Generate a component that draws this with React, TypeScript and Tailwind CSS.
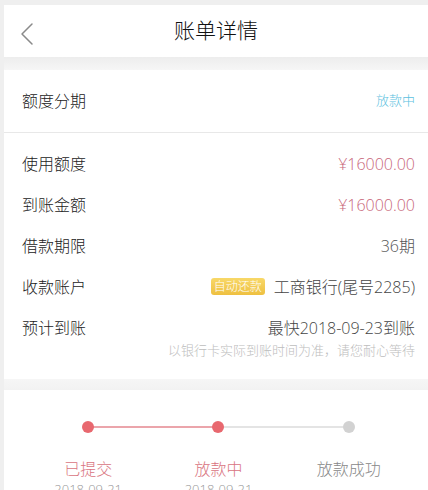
import { ChevronLeft } from "lucide-react";

const font = { fontFamily: '"Open Sans", "Noto Sans CJK SC", sans-serif' };

const rows = [
  { label: "使用额度", value: "¥16000.00", tone: "text-[#c8667a]" },
  { label: "到账金额", value: "¥16000.00", tone: "text-[#c8667a]" },
  { label: "借款期限", value: "36期", tone: "text-[#555]" },
];

const steps = [
  { label: "已提交", date: "2018-09-21", done: true },
  { label: "放款中", date: "2018-09-21", done: true },
  { label: "放款成功", date: "", done: false },
];

export default function App() {
  return (
    <div className="h-[490px] w-[428px] overflow-hidden bg-[#efefef] pl-[4px] pt-[5px] font-light" style={font}>
      <div className="h-full bg-white">
        {/* header */}
        <div className="relative flex h-[52px] items-center justify-center bg-white">
          <ChevronLeft className="absolute left-[3px] top-[9px] h-[40px] w-[40px] text-[#8a8a8a]" strokeWidth={0.9} />
          <h1 className="text-[21px] text-[#111]">账单详情</h1>
        </div>
        <div className="h-[13px] bg-gradient-to-b from-[#ededed] to-[#f6f6f6]" />

        {/* type */}
        <div className="flex h-[63px] items-center justify-between border-b border-[#e8e8e8] pl-[18px] pr-[13px]">
          <span className="text-[16px] text-[#222]">额度分期</span>
          <span className="text-[13px] text-[#5dbfe0]">放款中</span>
        </div>

        {/* details */}
        <div className="pl-[18px] pr-[13px] pt-[10px] pb-[21px]">
          {rows.map(r => (
            <div key={r.label} className="flex h-[41px] items-center justify-between">
              <span className="text-[16px] text-[#222]">{r.label}</span>
              <span className={`text-[16px] ${r.tone}`}>{r.value}</span>
            </div>
          ))}
          <div className="flex h-[41px] items-center justify-between">
            <span className="text-[16px] text-[#222]">收款账户</span>
            <div className="flex items-center gap-[9px]">
              <span className="flex h-[17px] w-[54px] items-center justify-center rounded-[3px] bg-gradient-to-b from-[#f8d868] to-[#eec040] text-[12px] leading-none text-white">
                自动还款
              </span>
              <span className="text-[16px] text-[#444]">工商银行(尾号2285)</span>
            </div>
          </div>
          <div className="flex h-[41px] items-center justify-between">
            <span className="text-[16px] text-[#222]">预计到账</span>
            <span className="text-[16px] text-[#444]">最快2018-09-23到账</span>
          </div>
          <p className="-mt-[6px] text-right text-[13px] leading-[16px] text-[#bdbdbd]">以银行卡实际到账时间为准，请您耐心等待</p>
        </div>
        <div className="h-[11px] bg-gradient-to-b from-[#f6f6f6] to-[#f2f2f2]" />

        {/* progress */}
        <div className="relative ml-[19px] mr-[14px] pt-[31px]">
          <div className="absolute left-[65px] right-[65px] top-[36px] flex">
            <div className="h-[2px] flex-1 bg-[#eba5ab]" />
            <div className="h-[2px] flex-1 bg-[#e4e4e4]" />
          </div>
          <div className="grid grid-cols-3">
            {steps.map(s => (
              <div key={s.label} className="relative flex flex-col items-center">
                <span className={`h-[12px] w-[12px] rounded-full ${s.done ? "bg-[#e8686f]" : "bg-[#d2d2d2]"}`} />
                <span className={`mt-[25px] text-[16px] leading-[22px] ${s.done ? "text-[#d9737e]" : "text-[#888]"}`}>{s.label}</span>
                <span className="text-[13px] leading-[18px] text-[#999]">{s.date}</span>
              </div>
            ))}
          </div>
        </div>
      </div>
    </div>
  );
}
